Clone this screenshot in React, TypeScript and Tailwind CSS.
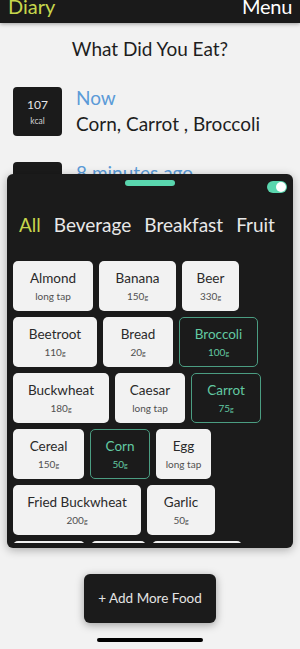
import React from "react";

type Chip = { name: string; sub: string; w: string; sel?: boolean };

const rows: Chip[][] = [
  [
    { name: "Almond", sub: "long tap", w: "w-[80px]" },
    { name: "Banana", sub: "150", w: "w-[77px]" },
    { name: "Beer", sub: "330", w: "w-[57px]" },
  ],
  [
    { name: "Beetroot", sub: "110", w: "w-[84px]" },
    { name: "Bread", sub: "20", w: "w-[70px]" },
    { name: "Broccoli", sub: "100", w: "w-[79px]", sel: true },
  ],
  [
    { name: "Buckwheat", sub: "180", w: "w-[96px]" },
    { name: "Caesar", sub: "long tap", w: "w-[70px]" },
    { name: "Carrot", sub: "75", w: "w-[70px]", sel: true },
  ],
  [
    { name: "Cereal", sub: "150", w: "w-[71px]" },
    { name: "Corn", sub: "50", w: "w-[60px]", sel: true },
    { name: "Egg", sub: "long tap", w: "w-[55px]" },
  ],
  [
    { name: "Fried Buckwheat", sub: "200", w: "w-[128px]" },
    { name: "Garlic", sub: "50", w: "w-[68px]" },
  ],
  [
    { name: "Grapes", sub: "150", w: "w-[72px]" },
    { name: "Ham", sub: "50", w: "w-[55px]" },
    { name: "Hot Chocolate", sub: "250", w: "w-[90px]" },
  ],
];

function FoodChip({ c }: { c: Chip }) {
  const base = c.sel
    ? "bg-[#1b1b1b] border border-[#4b9d82] text-[#62c9a2]"
    : "bg-[#f2f2f2] text-[#2a2a2a]";
  const subColor = c.sel ? "text-[#62c9a2]" : "text-[#505050]";
  return (
    <div
      className={`${c.w} h-[50px] shrink-0 rounded-[5px] flex flex-col items-center justify-center ${base}`}
    >
      <div className="text-[13.5px] leading-[18px] whitespace-nowrap">{c.name}</div>
      <div className={`text-[10px] leading-[14px] mt-[2px] whitespace-nowrap ${subColor}`}>
        {c.sub === "long tap" ? (
          "long tap"
        ) : (
          <>
            {c.sub}
            <span className="text-[7px]">g</span>
          </>
        )}
      </div>
    </div>
  );
}

export default function App() {
  return (
    <div
      className="w-[300px] h-[649px] overflow-hidden bg-[#f2f2f2] flex flex-col"
      style={{ fontFamily: "Lato, 'Noto Sans', sans-serif" }}
    >
      {/* header */}
      <div className="h-[23px] shrink-0 bg-[#1a1a1a] flex justify-between overflow-hidden px-[8px] shadow-[0_1px_4px_rgba(0,0,0,0.35)] relative z-20">
        <div className="text-[20px] leading-[20px] text-[#c6d64c] -mt-[4px]">Diary</div>
        <div className="text-[20px] leading-[20px] text-white -mt-[4px] tracking-[-0.3px]">Menu</div>
      </div>

      {/* title */}
      <div className="mt-[14px] text-center text-[19px] leading-[24px] text-[#1e1e1e]">
        What Did You Eat?
      </div>

      {/* entry 1 */}
      <div className="mt-[26px] h-[49px] flex px-[13px] gap-[14px]">
        <div className="w-[49px] h-[49px] rounded-[4px] bg-[#1b1b1b] flex flex-col items-center justify-center text-[#e6e6e6]">
          <div className="text-[12px] leading-[15px]">107</div>
          <div className="text-[8.5px] leading-[11px] mt-[4px] text-[#cfcfcf]">kcal</div>
        </div>
        <div className="flex flex-col -mt-[2px]">
          <div className="text-[19px] leading-[26px] text-[#5b9bd8]">Now</div>
          <div className="text-[19px] leading-[26px] text-[#1e1e1e]">Corn, Carrot , Broccoli</div>
        </div>
      </div>

      {/* entry 2 (partially covered) */}
      <div className="mt-[26px] h-[49px] flex px-[13px] gap-[14px]">
        <div className="w-[49px] h-[49px] rounded-[4px] bg-[#1b1b1b] flex flex-col items-center justify-center text-[#e6e6e6]">
          <div className="text-[12px] leading-[15px]">103</div>
          <div className="text-[8.5px] leading-[11px] mt-[4px] text-[#cfcfcf]">kcal</div>
        </div>
        <div className="flex flex-col -mt-[2px]">
          <div className="text-[19px] leading-[26px] text-[#5b9bd8]">8 minutes ago</div>
          <div className="text-[19px] leading-[26px] text-[#1e1e1e]">Egg, Bread</div>
        </div>
      </div>

      {/* panel */}
      <div className="relative z-10 -mt-[37px] mx-[7px] h-[374px] shrink-0 rounded-[6px] bg-[#1b1b1b] shadow-[0_2px_10px_rgba(0,0,0,0.3)] flex flex-col overflow-hidden">
        <div className="relative h-[20px] shrink-0 flex justify-center pt-[6px]">
          <div className="w-[50px] h-[6px] rounded-full bg-[#5ad6ae]" />
          <div className="absolute right-[6px] top-[7px] w-[20px] h-[12px] rounded-full bg-[#5ad6ae] flex items-center justify-end pr-[1px]">
            <div className="w-[10px] h-[10px] rounded-full bg-white" />
          </div>
        </div>
        <div className="flex gap-[13px] pl-[12px] mt-[19px] text-[19px] leading-[24px] text-[#e8e8e8] whitespace-nowrap shrink-0">
          <span className="text-[#c6d64c]">All</span>
          <span>Beverage</span>
          <span>Breakfast</span>
          <span>Fruit</span>
        </div>
        <div className="mt-[24px] h-[282px] shrink-0 overflow-hidden flex flex-col gap-[6px] pl-[6px]">
          {rows.map((r, i) => (
            <div key={i} className="flex gap-[6px]">
              {r.map((c) => (
                <FoodChip key={c.name} c={c} />
              ))}
            </div>
          ))}
        </div>
      </div>

      {/* button */}
      <div className="mt-[26px] flex justify-center">
        <div className="w-[132px] h-[49px] rounded-[6px] bg-[#1b1b1b] shadow-[0_2px_8px_rgba(0,0,0,0.35)] flex items-center justify-center text-[13.5px] text-[#e4e4e4]">
          + Add More Food
        </div>
      </div>

      {/* home indicator */}
      <div className="mt-[15px] flex justify-center">
        <div className="w-[106px] h-[4px] rounded-full bg-black" />
      </div>
    </div>
  );
}
